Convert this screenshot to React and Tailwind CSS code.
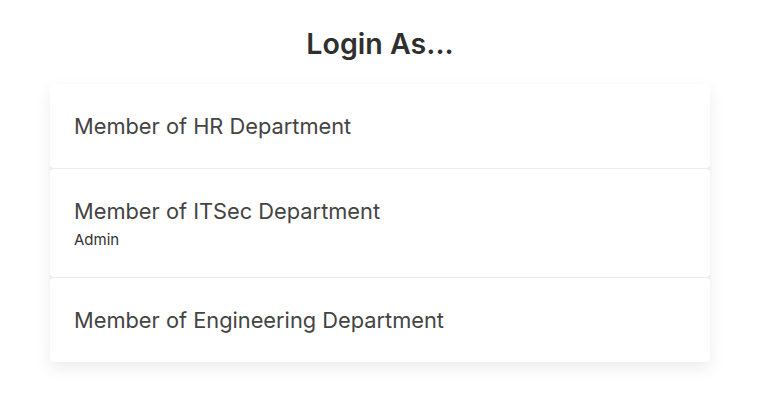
export default function App() {
  const items = [
    { title: "Member of HR Department" },
    { title: "Member of ITSec Department", sub: "Admin" },
    { title: "Member of Engineering Department" },
  ];
  return (
    <div className="min-h-[401px] bg-white pl-[50px] pr-[52px] pt-[26px] font-['Inter',sans-serif] text-[#333]">
      <h1 className="text-center text-[28.6px] font-semibold leading-[36px] text-[#2f2f2f]">Login As...</h1>
      <div className="mt-[22px] flex flex-col gap-px bg-[#ececec] rounded-[5px] shadow-[0_6px_16px_rgba(0,0,0,0.08)]">
        {items.map((it) => (
          <div
            key={it.title}
            className="flex flex-col justify-center bg-white rounded-[4px] px-6 py-7"
          >
            <div className="text-[21.8px] leading-[28px] text-[#444]">{it.title}</div>
            {it.sub && <div className="mt-[5px] text-[15px] leading-[19px] text-[#333]">{it.sub}</div>}
          </div>
        ))}
      </div>
    </div>
  );
}
